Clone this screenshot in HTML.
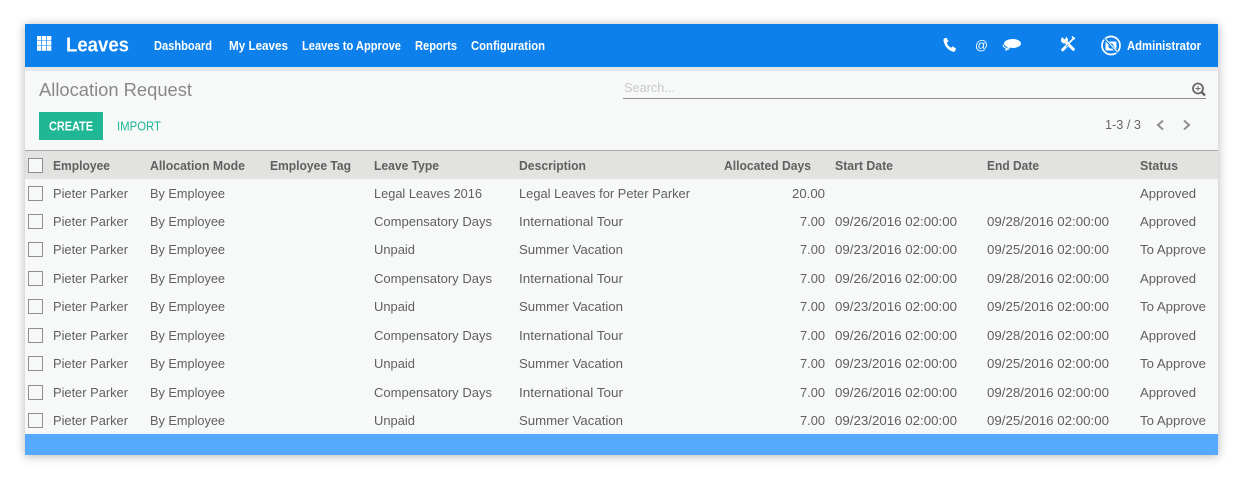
<!DOCTYPE html>
<html><head><meta charset="utf-8">
<style>
html,body{margin:0;padding:0;background:#fff;width:1243px;height:479px;overflow:hidden}
svg{display:block;font-family:"Liberation Sans",sans-serif}
.n{font-size:12.5px;font-weight:700;fill:#fff}
.h{font-size:13px;font-weight:700;fill:#625f5f}
.r{font-size:13px;fill:#5f5f5f}
.cb{fill:#f7f9f9;stroke:#8f8f8f;stroke-width:1}
</style></head><body>
<svg width="1243" height="479" viewBox="0 0 1243 479" xmlns="http://www.w3.org/2000/svg">
<defs>
<filter id="s" x="-5%" y="-10%" width="110%" height="120%"><feDropShadow dx="0" dy="1" stdDeviation="5" flood-color="#000" flood-opacity=".3"/></filter>
</defs>
<rect x="25" y="24" width="1193" height="431" fill="#f7f9f9" filter="url(#s)"/>
<rect x="25" y="67" width="1193" height="4" fill="#e6e7e7"/>
<rect x="25" y="24" width="1193" height="43" fill="#0d80ec"/>
<rect x="25" y="434" width="1193" height="21" fill="#55a9fe"/>

<!-- apps -->
<g fill="#fff">
<rect x="37" y="36" width="4.300" height="4.500"/><rect x="42" y="36" width="4.300" height="4.500"/><rect x="47" y="36" width="4.300" height="4.500"/>
<rect x="37" y="41" width="4.300" height="4.500"/><rect x="42" y="41" width="4.300" height="4.500"/><rect x="47" y="41" width="4.300" height="4.500"/>
<rect x="37" y="46" width="4.300" height="4.800"/><rect x="42" y="46" width="4.300" height="4.800"/><rect x="47" y="46" width="4.300" height="4.800"/>
</g>
<text x="66" y="51.500" font-size="20.500" font-weight="700" fill="#fff" textLength="63" lengthAdjust="spacingAndGlyphs">Leaves</text>
<text class="n" x="154" y="50" textLength="58" lengthAdjust="spacingAndGlyphs">Dashboard</text>
<text class="n" x="229" y="50" textLength="59" lengthAdjust="spacingAndGlyphs">My Leaves</text>
<text class="n" x="302" y="50" textLength="99" lengthAdjust="spacingAndGlyphs">Leaves to Approve</text>
<text class="n" x="415" y="50" textLength="42" lengthAdjust="spacingAndGlyphs">Reports</text>
<text class="n" x="471" y="50" textLength="74" lengthAdjust="spacingAndGlyphs">Configuration</text>

<!-- phone -->
<path d="M944 38.500l2.500-.8 2 3.600-1.700 1.500c.6 2.200 2.200 4 4.300 5l1.600-1.500 3.300 2.300-.9 2.400c-.4.700-1.400.9-2.300.6-4.500-1.400-8-5-9.300-10.700-.1-1.100.2-2 .5-2.400z" fill="#fff"/>
<text x="975" y="49.500" font-size="13" fill="#fff" textLength="13" lengthAdjust="spacingAndGlyphs">@</text>
<!-- chat -->
<ellipse cx="1012.500" cy="43.500" rx="8.500" ry="4.500" fill="#fff"/>
<path d="M1008 46.500l-1.500 2.500 3.500-1.500z" fill="#fff"/>
<path d="M1003.500 44.500c-.8 1.800.5 3 3 3.800l-.6 1.700 3.700-1.400" fill="none" stroke="#fff" stroke-width="1"/>
<!-- tools -->
<circle cx="1064.500" cy="40" r="3.600" fill="#fff"/>
<path d="M1060 35l4.500 4.500 1.800-1.800-3-3.500z" fill="#0d80ec"/>
<g fill="none" stroke="#fff">
<path d="M1065 41l8.300 8.300" stroke-width="3" stroke-linecap="round"/>
<path d="M1074.500 37.500l-6.500 6.500" stroke-width="1.700"/>
<path d="M1067 45.500l-4.300 4.300" stroke-width="3" stroke-linecap="round"/>
<path d="M1072 36.500l2.700 2.700" stroke-width="1.500"/>
</g>
<path d="M1065.800 47l2.300-2.300" stroke="#0d80ec" stroke-width=".8"/>
<!-- avatar -->
<circle cx="1111" cy="45.500" r="9" fill="none" stroke="#fff" stroke-width="1.700"/>
<rect x="1105.500" y="41.500" width="11" height="9" rx="1" fill="#fff"/>
<circle cx="1111" cy="46" r="2.600" fill="#0d80ec"/>
<path d="M1104.500 38.500l13 14" stroke="#0d80ec" stroke-width="2.600"/>
<path d="M1105 38.500l12.500 13.500" stroke="#fff" stroke-width="1"/>
<text class="n" x="1127" y="50" textLength="74" lengthAdjust="spacingAndGlyphs">Administrator</text>

<!-- control panel -->
<text x="39" y="96" font-size="18" fill="#888" textLength="153" lengthAdjust="spacingAndGlyphs">Allocation Request</text>
<text x="624" y="92" font-size="13" fill="#c8c8c8" textLength="51" lengthAdjust="spacingAndGlyphs">Search...</text>
<rect x="623" y="98" width="583" height="1" fill="#8c8c8c"/>
<circle cx="1198" cy="88.500" r="5" fill="none" stroke="#666" stroke-width="1.800"/>
<path d="M1201.500 92l3.500 3.500" stroke="#666" stroke-width="2.400"/>
<path d="M1195.500 88.500h5M1198 86v5" stroke="#666" stroke-width="1"/>
<rect x="39" y="112" width="64" height="28" fill="#1fb794"/>
<text x="49" y="130.500" font-size="12.500" font-weight="700" fill="#fff" textLength="44" lengthAdjust="spacingAndGlyphs">CREATE</text>
<text x="117" y="130.500" font-size="12.500" fill="#1fb794" textLength="44" lengthAdjust="spacingAndGlyphs">IMPORT</text>
<text x="1105" y="129" font-size="13" fill="#666" textLength="36" lengthAdjust="spacingAndGlyphs">1-3 / 3</text>
<path d="M1163 120.500l-5 4.500 5 4.500" fill="none" stroke="#8f8f8f" stroke-width="2"/>
<path d="M1184 120.500l5 4.500-5 4.500" fill="none" stroke="#8f8f8f" stroke-width="2"/>

<!-- header -->
<rect x="25" y="151" width="1193" height="28" fill="#e2e2e0"/>
<rect x="25" y="150" width="1193" height="1" fill="#a9a9a9"/>
<rect class="cb" x="28.500" y="158.500" width="14" height="14"/>
<text class="h" x="53" y="170" textLength="57" lengthAdjust="spacingAndGlyphs">Employee</text>
<text class="h" x="150" y="170" textLength="95" lengthAdjust="spacingAndGlyphs">Allocation Mode</text>
<text class="h" x="270" y="170" textLength="81" lengthAdjust="spacingAndGlyphs">Employee Tag</text>
<text class="h" x="374" y="170" textLength="65" lengthAdjust="spacingAndGlyphs">Leave Type</text>
<text class="h" x="519" y="170" textLength="67" lengthAdjust="spacingAndGlyphs">Description</text>
<text class="h" x="724" y="170" textLength="87" lengthAdjust="spacingAndGlyphs">Allocated Days</text>
<text class="h" x="835" y="170" textLength="58" lengthAdjust="spacingAndGlyphs">Start Date</text>
<text class="h" x="987" y="170" textLength="52" lengthAdjust="spacingAndGlyphs">End Date</text>
<text class="h" x="1140" y="170" textLength="38" lengthAdjust="spacingAndGlyphs">Status</text>

<!-- row 1 -->
<g transform="translate(0,198)">
<rect class="cb" x="28.500" y="-11.500" width="14" height="14"/>
<text class="r" x="53" textLength="75" lengthAdjust="spacingAndGlyphs">Pieter Parker</text>
<text class="r" x="150" textLength="75" lengthAdjust="spacingAndGlyphs">By Employee</text>
<text class="r" x="374" textLength="108" lengthAdjust="spacingAndGlyphs">Legal Leaves 2016</text>
<text class="r" x="519" textLength="171" lengthAdjust="spacingAndGlyphs">Legal Leaves for Peter Parker</text>
<text class="r" x="792" textLength="33" lengthAdjust="spacingAndGlyphs">20.00</text>
<text class="r" x="1140" textLength="56" lengthAdjust="spacingAndGlyphs">Approved</text>
</g>
<!-- row 2 -->
<g transform="translate(0,226)">
<rect class="cb" x="28.500" y="-11.500" width="14" height="14"/>
<text class="r" x="53" textLength="75" lengthAdjust="spacingAndGlyphs">Pieter Parker</text>
<text class="r" x="150" textLength="75" lengthAdjust="spacingAndGlyphs">By Employee</text>
<text class="r" x="374" textLength="118" lengthAdjust="spacingAndGlyphs">Compensatory Days</text>
<text class="r" x="519" textLength="104" lengthAdjust="spacingAndGlyphs">International Tour</text>
<text class="r" x="800" textLength="25" lengthAdjust="spacingAndGlyphs">7.00</text>
<text class="r" x="835" textLength="122" lengthAdjust="spacingAndGlyphs">09/26/2016 02:00:00</text>
<text class="r" x="987" textLength="122" lengthAdjust="spacingAndGlyphs">09/28/2016 02:00:00</text>
<text class="r" x="1140" textLength="56" lengthAdjust="spacingAndGlyphs">Approved</text>
</g>
<!-- row 3 -->
<g transform="translate(0,254)">
<rect class="cb" x="28.500" y="-11.500" width="14" height="14"/>
<text class="r" x="53" textLength="75" lengthAdjust="spacingAndGlyphs">Pieter Parker</text>
<text class="r" x="150" textLength="75" lengthAdjust="spacingAndGlyphs">By Employee</text>
<text class="r" x="374" textLength="41" lengthAdjust="spacingAndGlyphs">Unpaid</text>
<text class="r" x="519" textLength="104" lengthAdjust="spacingAndGlyphs">Summer Vacation</text>
<text class="r" x="800" textLength="25" lengthAdjust="spacingAndGlyphs">7.00</text>
<text class="r" x="835" textLength="122" lengthAdjust="spacingAndGlyphs">09/23/2016 02:00:00</text>
<text class="r" x="987" textLength="122" lengthAdjust="spacingAndGlyphs">09/25/2016 02:00:00</text>
<text class="r" x="1140" textLength="66" lengthAdjust="spacingAndGlyphs">To Approve</text>
</g>
<!-- row 4 -->
<g transform="translate(0,283)">
<rect class="cb" x="28.500" y="-11.500" width="14" height="14"/>
<text class="r" x="53" textLength="75" lengthAdjust="spacingAndGlyphs">Pieter Parker</text>
<text class="r" x="150" textLength="75" lengthAdjust="spacingAndGlyphs">By Employee</text>
<text class="r" x="374" textLength="118" lengthAdjust="spacingAndGlyphs">Compensatory Days</text>
<text class="r" x="519" textLength="104" lengthAdjust="spacingAndGlyphs">International Tour</text>
<text class="r" x="800" textLength="25" lengthAdjust="spacingAndGlyphs">7.00</text>
<text class="r" x="835" textLength="122" lengthAdjust="spacingAndGlyphs">09/26/2016 02:00:00</text>
<text class="r" x="987" textLength="122" lengthAdjust="spacingAndGlyphs">09/28/2016 02:00:00</text>
<text class="r" x="1140" textLength="56" lengthAdjust="spacingAndGlyphs">Approved</text>
</g>
<!-- row 5 -->
<g transform="translate(0,311)">
<rect class="cb" x="28.500" y="-11.500" width="14" height="14"/>
<text class="r" x="53" textLength="75" lengthAdjust="spacingAndGlyphs">Pieter Parker</text>
<text class="r" x="150" textLength="75" lengthAdjust="spacingAndGlyphs">By Employee</text>
<text class="r" x="374" textLength="41" lengthAdjust="spacingAndGlyphs">Unpaid</text>
<text class="r" x="519" textLength="104" lengthAdjust="spacingAndGlyphs">Summer Vacation</text>
<text class="r" x="800" textLength="25" lengthAdjust="spacingAndGlyphs">7.00</text>
<text class="r" x="835" textLength="122" lengthAdjust="spacingAndGlyphs">09/23/2016 02:00:00</text>
<text class="r" x="987" textLength="122" lengthAdjust="spacingAndGlyphs">09/25/2016 02:00:00</text>
<text class="r" x="1140" textLength="66" lengthAdjust="spacingAndGlyphs">To Approve</text>
</g>
<!-- row 6 -->
<g transform="translate(0,340)">
<rect class="cb" x="28.500" y="-11.500" width="14" height="14"/>
<text class="r" x="53" textLength="75" lengthAdjust="spacingAndGlyphs">Pieter Parker</text>
<text class="r" x="150" textLength="75" lengthAdjust="spacingAndGlyphs">By Employee</text>
<text class="r" x="374" textLength="118" lengthAdjust="spacingAndGlyphs">Compensatory Days</text>
<text class="r" x="519" textLength="104" lengthAdjust="spacingAndGlyphs">International Tour</text>
<text class="r" x="800" textLength="25" lengthAdjust="spacingAndGlyphs">7.00</text>
<text class="r" x="835" textLength="122" lengthAdjust="spacingAndGlyphs">09/26/2016 02:00:00</text>
<text class="r" x="987" textLength="122" lengthAdjust="spacingAndGlyphs">09/28/2016 02:00:00</text>
<text class="r" x="1140" textLength="56" lengthAdjust="spacingAndGlyphs">Approved</text>
</g>
<!-- row 7 -->
<g transform="translate(0,368)">
<rect class="cb" x="28.500" y="-11.500" width="14" height="14"/>
<text class="r" x="53" textLength="75" lengthAdjust="spacingAndGlyphs">Pieter Parker</text>
<text class="r" x="150" textLength="75" lengthAdjust="spacingAndGlyphs">By Employee</text>
<text class="r" x="374" textLength="41" lengthAdjust="spacingAndGlyphs">Unpaid</text>
<text class="r" x="519" textLength="104" lengthAdjust="spacingAndGlyphs">Summer Vacation</text>
<text class="r" x="800" textLength="25" lengthAdjust="spacingAndGlyphs">7.00</text>
<text class="r" x="835" textLength="122" lengthAdjust="spacingAndGlyphs">09/23/2016 02:00:00</text>
<text class="r" x="987" textLength="122" lengthAdjust="spacingAndGlyphs">09/25/2016 02:00:00</text>
<text class="r" x="1140" textLength="66" lengthAdjust="spacingAndGlyphs">To Approve</text>
</g>
<!-- row 8 -->
<g transform="translate(0,397)">
<rect class="cb" x="28.500" y="-11.500" width="14" height="14"/>
<text class="r" x="53" textLength="75" lengthAdjust="spacingAndGlyphs">Pieter Parker</text>
<text class="r" x="150" textLength="75" lengthAdjust="spacingAndGlyphs">By Employee</text>
<text class="r" x="374" textLength="118" lengthAdjust="spacingAndGlyphs">Compensatory Days</text>
<text class="r" x="519" textLength="104" lengthAdjust="spacingAndGlyphs">International Tour</text>
<text class="r" x="800" textLength="25" lengthAdjust="spacingAndGlyphs">7.00</text>
<text class="r" x="835" textLength="122" lengthAdjust="spacingAndGlyphs">09/26/2016 02:00:00</text>
<text class="r" x="987" textLength="122" lengthAdjust="spacingAndGlyphs">09/28/2016 02:00:00</text>
<text class="r" x="1140" textLength="56" lengthAdjust="spacingAndGlyphs">Approved</text>
</g>
<!-- row 9 -->
<g transform="translate(0,425)">
<rect class="cb" x="28.500" y="-11.500" width="14" height="14"/>
<text class="r" x="53" textLength="75" lengthAdjust="spacingAndGlyphs">Pieter Parker</text>
<text class="r" x="150" textLength="75" lengthAdjust="spacingAndGlyphs">By Employee</text>
<text class="r" x="374" textLength="41" lengthAdjust="spacingAndGlyphs">Unpaid</text>
<text class="r" x="519" textLength="104" lengthAdjust="spacingAndGlyphs">Summer Vacation</text>
<text class="r" x="800" textLength="25" lengthAdjust="spacingAndGlyphs">7.00</text>
<text class="r" x="835" textLength="122" lengthAdjust="spacingAndGlyphs">09/23/2016 02:00:00</text>
<text class="r" x="987" textLength="122" lengthAdjust="spacingAndGlyphs">09/25/2016 02:00:00</text>
<text class="r" x="1140" textLength="66" lengthAdjust="spacingAndGlyphs">To Approve</text>
</g>
</svg>
</body></html>
